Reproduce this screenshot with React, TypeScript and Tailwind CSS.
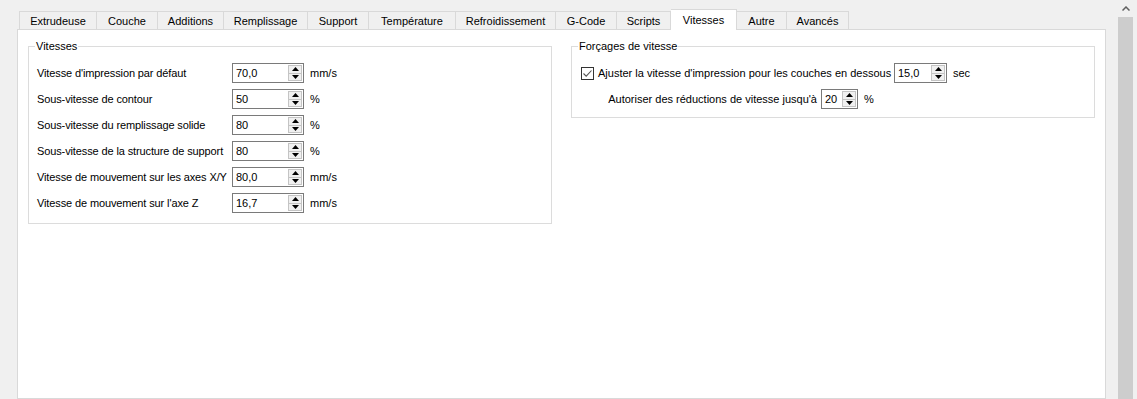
const tabs = [
  { label: "Extrudeuse", w: "w-[78px] border-l" },
  { label: "Couche", w: "w-[61px]" },
  { label: "Additions", w: "w-[66px]" },
  { label: "Remplissage", w: "w-[84px]" },
  { label: "Support", w: "w-[61px]" },
  { label: "Température", w: "w-[87px]" },
  { label: "Refroidissement", w: "w-[100px]" },
  { label: "G-Code", w: "w-[61px]" },
  { label: "Scripts", w: "w-[54px]" },
  { label: "Vitesses", w: "w-[66px]", active: true },
  { label: "Autre", w: "w-[50px]" },
  { label: "Avancés", w: "w-[62px]" },
];

const speeds = [
  { label: "Vitesse d'impression par défaut", value: "70,0", unit: "mm/s" },
  { label: "Sous-vitesse de contour", value: "50", unit: "%" },
  { label: "Sous-vitesse du remplissage solide", value: "80", unit: "%" },
  { label: "Sous-vitesse de la structure de support", value: "80", unit: "%" },
  { label: "Vitesse de mouvement sur les axes X/Y", value: "80,0", unit: "mm/s" },
  { label: "Vitesse de mouvement sur l'axe Z", value: "16,7", unit: "mm/s" },
];

function Arrow({ up }: { up?: boolean }) {
  return (
    <svg width="7" height="4" viewBox="0 0 7 4">
      <path d={up ? "M0 4 L3.5 0 L7 4 Z" : "M0 0 L3.5 4 L7 0 Z"} fill="#000" />
    </svg>
  );
}

function SpinBox({ value, w }: { value: string; w: string }) {
  return (
    <div className={`flex h-[20px] ${w} border border-[#7a7a7a] bg-white`}>
      <div className="flex flex-1 items-center pl-[3px]">{value}</div>
      <div className="flex w-[15px] flex-col py-px pr-px">
        <div className="flex flex-1 items-center justify-center border border-[#c4c4c4] bg-[#f0f0f0]">
          <Arrow up />
        </div>
        <div className="flex flex-1 items-center justify-center border border-t-0 border-[#c4c4c4] bg-[#f0f0f0]">
          <Arrow />
        </div>
      </div>
    </div>
  );
}

export default function App() {
  return (
    <div
      className="flex h-[399px] w-[1137px] overflow-hidden bg-[#f0f0f0] text-[11px] leading-[14px] text-black"
      style={{ fontFamily: '"Liberation Sans", Arial, sans-serif' }}
    >
      <div className="ml-[17px] mt-[9px] flex w-[1089px] flex-col">
        <div className="flex h-[20px] items-end pl-[2px]">
          {tabs.map((t) =>
            t.active ? (
              <div
                key={t.label}
                className={`relative z-10 -mb-px flex h-[21px] items-center justify-center border-t border-r border-[#d9d9d9] bg-white ${t.w}`}
              >
                {t.label}
              </div>
            ) : (
              <div
                key={t.label}
                className={`flex h-[18px] items-center justify-center border-t border-r border-[#d9d9d9] bg-[#f0f0f0] ${t.w}`}
              >
                {t.label}
              </div>
            )
          )}
        </div>
        <div className="flex flex-1 items-start gap-[19px] border border-[#d9d9d9] bg-white pl-[10px] pt-[9px]">
          <fieldset className="w-[524px] border border-[#dcdcdc] pb-[10px] pl-[8px]">
            <legend className="-ml-[2px] px-px">Vitesses</legend>
            <div className="grid grid-cols-[195px_72px_auto] items-center gap-y-[6px] pt-[10px]">
              {speeds.map((s) => (
                <div key={s.label} className="contents">
                  <div className="whitespace-nowrap tracking-[-0.12px]">{s.label}</div>
                  <SpinBox value={s.value} w="w-[72px]" />
                  <div className="ml-[6px]">{s.unit}</div>
                </div>
              ))}
            </div>
          </fieldset>
          <fieldset className="w-[524px] border border-[#dcdcdc] pb-[8px] pl-[9px]">
            <legend className="-ml-[3px] px-px">Forçages de vitesse</legend>
            <div className="flex flex-col gap-[6px] pt-[10px]">
              <div className="flex h-[20px] items-center">
                <div className="flex h-[13px] w-[13px] items-center justify-center border border-[#333333] bg-white">
                  <svg width="11" height="11" viewBox="0 0 11 11">
                    <path d="M1.5 5.5 L4.2 8.2 L9.5 2.5" fill="none" stroke="#555" strokeWidth="1.1" />
                  </svg>
                </div>
                <div className="ml-[4px] w-[296px]">Ajuster la vitesse d'impression pour les couches en dessous</div>
                <SpinBox value="15,0" w="w-[53px]" />
                <div className="ml-[6px]">sec</div>
              </div>
              <div className="flex h-[20px] items-center">
                <div className="w-[240px] pr-[4px] text-right">Autoriser des réductions de vitesse jusqu'à</div>
                <SpinBox value="20" w="w-[37px]" />
                <div className="ml-[6px]">%</div>
              </div>
            </div>
          </fieldset>
        </div>
      </div>
      <div className="ml-[12px] flex w-[15px] flex-col">
        <div className="flex h-[17px] items-center justify-center">
          <svg width="8" height="5" viewBox="0 0 8 5">
            <path d="M0.5 4.5 L4 1 L7.5 4.5" fill="none" stroke="#606060" strokeWidth="1.5" />
          </svg>
        </div>
        <div className="flex-1 bg-[#cdcdcd]" />
      </div>
    </div>
  );
}
